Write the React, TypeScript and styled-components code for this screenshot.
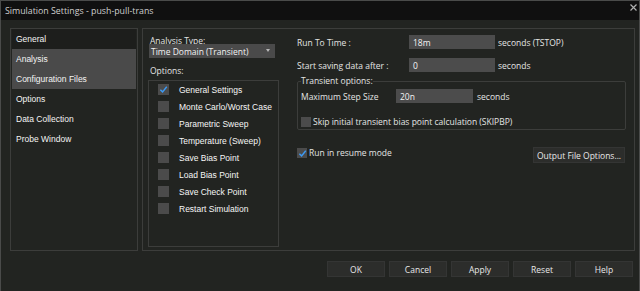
import React from 'react';
import styled, { createGlobalStyle } from 'styled-components';

const GlobalStyle = createGlobalStyle`
  html, body {
    margin: 0;
    padding: 0;
    background: #222421;
    overflow: hidden;
  }
  * {
    box-sizing: border-box;
  }
`;

const ui = `"Open Sans", "Noto Sans", sans-serif`;
const classic = `"Liberation Sans", Arial, sans-serif`;

const Window = styled.div`
  width: 640px;
  height: 291px;
  display: flex;
  flex-direction: column;
  background: #222421;
  border: 1px solid #4a4b4a;
  border-bottom: none;
  color: #e4e4e4;
  font-family: ${ui};
  font-size: 8.5px;
`;

const TitleBar = styled.div`
  height: 19px;
  flex: none;
  display: flex;
  align-items: center;
  justify-content: space-between;
  padding: 0 2px 0 4px;
  background: #101010;
  color: #cfcfcf;
  font-size: 8.8px;
`;

const CloseIcon = styled.svg`
  width: 7px;
  height: 7px;
  margin-top: -6px;
`;

const Body = styled.div`
  display: flex;
  gap: 4px;
  padding: 8px 4px 0 9px;
`;

const Nav = styled.div`
  width: 128px;
  height: 223px;
  border: 1px solid #3c3d3b;
  display: flex;
  flex-direction: column;
  font-family: ${classic};
`;

const NavItem = styled.div<{ $tone?: 'dark' | 'active' }>`
  height: 20px;
  display: flex;
  align-items: center;
  padding-left: 4px;
  margin: 0 1px;
  background: ${({ $tone }) =>
    $tone === 'active' ? '#4a4a4a' : $tone === 'dark' ? '#1d1e1c' : 'transparent'};
  color: #f4f4f4;
  font-size: 8.5px;
`;

const MainPanel = styled.div`
  width: 493px;
  height: 223px;
  border: 1px solid #3c3d3b;
  display: flex;
  padding: 6px 8px 3px 5px;
`;

const LeftCol = styled.div`
  width: 131px;
  flex: none;
  display: flex;
  flex-direction: column;
  padding-top: 1px;
`;

const FieldLabel = styled.div<{ $gap?: number }>`
  height: 9px;
  line-height: 9px;
  padding-left: 2px;
  margin-top: ${({ $gap }) => $gap ?? 0}px;
  white-space: nowrap;
`;

const Dropdown = styled.div`
  width: 126px;
  height: 14px;
  margin: -1px 0 0 1px;
  padding: 0 5px 0 2px;
  display: flex;
  align-items: center;
  justify-content: space-between;
  background: #4a4a4a;
  color: #f2f2f2;
`;

const Caret = styled.span`
  width: 0;
  height: 0;
  border-left: 2.5px solid transparent;
  border-right: 2.5px solid transparent;
  border-top: 3px solid #b8b8b8;
  margin-top: -1px;
`;

const ListBox = styled.div`
  flex: 1;
  margin-top: 5px;
  border: 1px solid #3c3d3b;
  font-family: ${classic};
`;

const ListRow = styled.div`
  height: 17px;
  display: flex;
  align-items: center;
  gap: 10px;
  padding-left: 9px;
  color: #f6f6f6;
  font-size: 8.5px;
  white-space: nowrap;
`;

const Box = styled.span<{ $size?: number }>`
  width: ${({ $size }) => $size ?? 11}px;
  height: ${({ $size }) => $size ?? 11}px;
  flex: none;
  display: inline-flex;
  align-items: center;
  justify-content: center;
  background: #4b4b4b;
`;

const Tick = () => (
  <svg width="9" height="9" viewBox="0 0 10 10">
    <path d="M1.5 5.2 L4 7.6 L8.6 2" fill="none" stroke="#3d9bf5" strokeWidth="1.6" />
  </svg>
);

const Check = ({ checked, size }: { checked?: boolean; size?: number }) => (
  <Box $size={size}>{checked && <Tick />}</Box>
);

const RightCol = styled.div`
  flex: 1;
  margin-left: 18px;
  display: flex;
  flex-direction: column;
`;

const FormRow = styled.div<{ $gap?: number }>`
  display: flex;
  align-items: center;
  height: 14px;
  margin-top: ${({ $gap }) => $gap ?? 0}px;
  white-space: nowrap;
`;

const RowLabel = styled.span<{ $w: number }>`
  width: ${({ $w }) => $w}px;
  flex: none;
`;

const TextInput = styled.div<{ $w: number }>`
  width: ${({ $w }) => $w}px;
  height: 14px;
  flex: none;
  display: flex;
  align-items: center;
  padding-left: 4px;
  background: #4c4c4c;
  color: #f4f4f4;
`;

const Unit = styled.span<{ $gap?: number }>`
  margin-left: ${({ $gap }) => $gap ?? 3}px;
`;

const Group = styled.fieldset`
  margin: 3px 0 0;
  padding: 0 3px 2px;
  border: 1px solid #3c3d3b;
  border-radius: 2px;
  min-width: 0;
`;

const Legend = styled.legend`
  padding: 0;
  height: 12px;
  line-height: 12px;
`;

const CheckLine = styled.label<{ $gap?: number }>`
  display: flex;
  align-items: center;
  gap: 2px;
  height: 10px;
  line-height: 10px;
  margin-top: ${({ $gap }) => $gap ?? 0}px;
  white-space: nowrap;
`;

const ActionRow = styled.div`
  display: flex;
  align-items: flex-start;
  justify-content: space-between;
  margin-top: 17px;
  padding-right: 1px;
`;

const Button = styled.button<{ $w?: number }>`
  width: ${({ $w }) => $w ?? 58}px;
  height: 16px;
  padding: 0;
  border: 1px solid #343534;
  background: #2c2d2b;
  color: #e8e8e8;
  font-family: ${ui};
  font-size: 8.5px;
`;

const Footer = styled.div`
  display: flex;
  justify-content: flex-end;
  gap: 4px;
  padding: 10px 6px 0 0;
`;

const options = [
  'General Settings',
  'Monte Carlo/Worst Case',
  'Parametric Sweep',
  'Temperature (Sweep)',
  'Save Bias Point',
  'Load Bias Point',
  'Save Check Point',
  'Restart Simulation',
];

const navItems: { label: string; tone?: 'dark' | 'active' }[] = [
  { label: 'General', tone: 'dark' },
  { label: 'Analysis', tone: 'active' },
  { label: 'Configuration Files', tone: 'active' },
  { label: 'Options' },
  { label: 'Data Collection' },
  { label: 'Probe Window' },
];

const App: React.FC = () => (
  <>
    <GlobalStyle />
    <Window>
      <TitleBar>
        <span>Simulation Settings - push-pull-trans</span>
        <CloseIcon viewBox="0 0 7 7">
          <path d="M0.5 0.5 L6.5 6.5 M6.5 0.5 L0.5 6.5" stroke="#b0b0b0" strokeWidth="1.2" />
        </CloseIcon>
      </TitleBar>
      <Body>
        <Nav>
          {navItems.map((n) => (
            <NavItem key={n.label} $tone={n.tone}>
              {n.label}
            </NavItem>
          ))}
        </Nav>
        <MainPanel>
          <LeftCol>
            <FieldLabel>Analysis Type:</FieldLabel>
            <Dropdown>
              <span>Time Domain (Transient)</span>
              <Caret />
            </Dropdown>
            <FieldLabel $gap={8}>Options:</FieldLabel>
            <ListBox>
              {options.map((o, i) => (
                <ListRow key={o}>
                  <Check checked={i === 0} />
                  <span>{o}</span>
                </ListRow>
              ))}
            </ListBox>
          </LeftCol>
          <RightCol>
            <FormRow>
              <RowLabel $w={112}>Run To Time :</RowLabel>
              <TextInput $w={86}>18m</TextInput>
              <Unit>seconds (TSTOP)</Unit>
            </FormRow>
            <FormRow $gap={9}>
              <RowLabel $w={112}>Start saving data after :</RowLabel>
              <TextInput $w={86}>0</TextInput>
              <Unit>seconds</Unit>
            </FormRow>
            <Group>
              <Legend>Transient options:</Legend>
              <FormRow $gap={2}>
                <RowLabel $w={95}>Maximum Step Size</RowLabel>
                <TextInput $w={77}>20n</TextInput>
                <Unit $gap={4}>seconds</Unit>
              </FormRow>
              <CheckLine $gap={14}>
                <Check size={10} />
                <span>Skip initial transient bias point calculation (SKIPBP)</span>
              </CheckLine>
            </Group>
            <ActionRow>
              <CheckLine $gap={1}>
                <Check checked size={10} />
                <span>Run in resume mode</span>
              </CheckLine>
              <Button $w={92}>Output File Options...</Button>
            </ActionRow>
          </RightCol>
        </MainPanel>
      </Body>
      <Footer>
        <Button>OK</Button>
        <Button>Cancel</Button>
        <Button>Apply</Button>
        <Button>Reset</Button>
        <Button>Help</Button>
      </Footer>
    </Window>
  </>
);

export default App;
